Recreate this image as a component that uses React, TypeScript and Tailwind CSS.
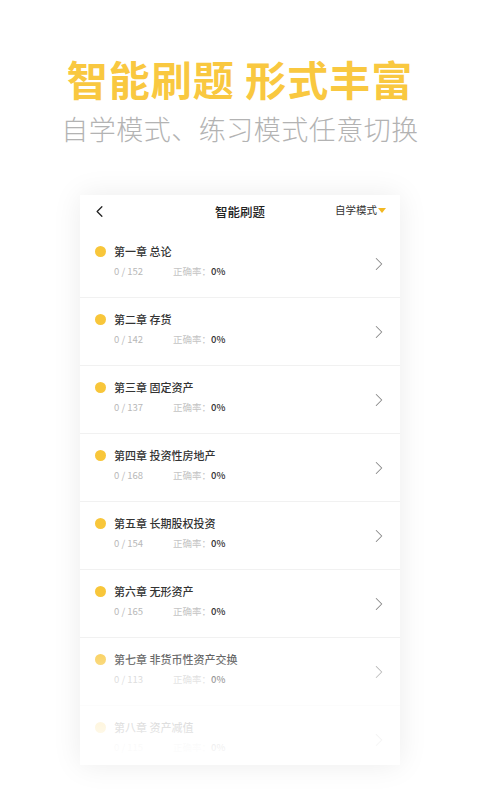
import { ChevronLeft, ChevronRight } from "lucide-react";

const chapters = [
  { title: "第一章 总论", total: 152 },
  { title: "第二章 存货", total: 142 },
  { title: "第三章 固定资产", total: 137 },
  { title: "第四章 投资性房地产", total: 168 },
  { title: "第五章 长期股权投资", total: 154 },
  { title: "第六章 无形资产", total: 165 },
  { title: "第七章 非货币性资产交换", total: 113 },
  { title: "第八章 资产减值", total: 115 },
];

const font = { fontFamily: '"Noto Sans CJK SC", "Noto Sans", sans-serif' };

function ChapterRow({ title, total }: { title: string; total: number }) {
  return (
    <div className="flex h-[68px] items-center border-b border-[#f1f1f1] pl-[15px] pr-[10px]">
      <div className="-mt-[5px] flex-1">
        <div className="flex items-center">
          <span className="h-[11px] w-[11px] rounded-full bg-[#f8c63a]" />
          <span className="ml-[8px] text-[11px] font-medium leading-none text-[#333]">{title}</span>
        </div>
        <div className="mt-[10px] flex items-center pl-[19px] text-[9.5px] leading-none">
          <span className="w-[59px] text-[#b8b8b8]">0 / {total}</span>
          <span className="text-[#c4c4c4]">正确率：</span>
          <span className="font-medium text-[#333]">0%</span>
        </div>
      </div>
      <ChevronRight className="h-[22px] w-[22px] text-[#888]" strokeWidth={1.1} />
    </div>
  );
}

export default function App() {
  return (
    <div className="flex h-[800px] w-[480px] flex-col items-center overflow-hidden bg-white" style={font}>
      <h1 className="mt-[54px] text-[41px] font-bold leading-[48px] tracking-[1px] text-[#f9c840]">
        智能刷题 形式丰富
      </h1>
      <p className="mt-[11px] text-[27px] font-light leading-[32px] tracking-[0.5px] text-[#b3b3b3]">
        自学模式、练习模式任意切换
      </p>

      <div className="relative mt-[50px] h-[570px] w-[320px] overflow-hidden bg-white shadow-[0_0_28px_rgba(0,0,0,0.08)]">
        <div className="relative flex h-[35px] items-center justify-center">
          <ChevronLeft className="absolute left-[10px] top-[7px] h-[19px] w-[19px] text-[#222]" strokeWidth={1.6} />
          <span className="text-[12.5px] font-medium text-[#222]">智能刷题</span>
          <div className="absolute right-[14px] top-[10px] flex items-center">
            <span className="text-[10.5px] leading-none text-[#333]">自学模式</span>
            <span className="ml-[1px] h-0 w-0 border-x-[4px] border-t-[5px] border-x-transparent border-t-[#f2b822]" />
          </div>
        </div>
        {chapters.map((c) => (
          <ChapterRow key={c.title} title={c.title} total={c.total} />
        ))}
        <div className="pointer-events-none absolute inset-x-0 bottom-0 h-[130px] bg-gradient-to-b from-white/0 via-white/75 to-white" />
      </div>
    </div>
  );
}
